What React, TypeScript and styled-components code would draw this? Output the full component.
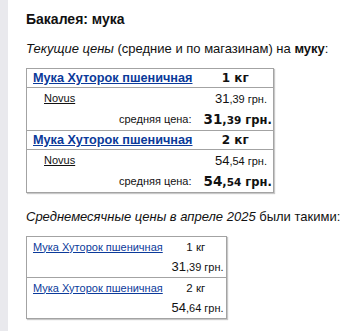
import React from "react";
import styled, { createGlobalStyle } from "styled-components";

const GlobalStyle = createGlobalStyle`
  html, body {
    margin: 0;
    padding: 0;
    background: #e9e9ed;
  }
  body {
    font-family: "Liberation Sans", Arial, sans-serif;
    color: #111;
  }
`;

interface Offer {
  name: string;
  weight: string;
  shop: string;
  price: [string, string];
  avg: [string, string];
}

const current: Offer[] = [
  { name: "Мука Хуторок пшеничная", weight: "1 кг", shop: "Novus", price: ["31", ",39"], avg: ["31", "39"] },
  { name: "Мука Хуторок пшеничная", weight: "2 кг", shop: "Novus", price: ["54", ",54"], avg: ["54", "54"] },
];

const monthly = [
  { name: "Мука Хуторок пшеничная", weight: "1 кг", price: ["31", ",39"] },
  { name: "Мука Хуторок пшеничная", weight: "2 кг", price: ["54", ",64"] },
];

const App: React.FC = () => {
  return (
    <>
      <GlobalStyle />
      <Page>
        <Title>Бакалея: мука</Title>
        <Intro>
          <i>Текущие цены</i> (средние и по магазинам) на <b>муку</b>:
        </Intro>

        <PriceTable $width={248}>
          <colgroup>
            <col style={{ width: 171 }} />
            <col />
          </colgroup>
          {current.map((o, i) => (
            <tbody key={i}>
              <HeadRow>
                <NameCell>
                  <ProductLink href="#" $bold>
                    {o.name}
                  </ProductLink>
                </NameCell>
                <WeightCell $bold>{o.weight}</WeightCell>
              </HeadRow>
              <Row $h={21}>
                <ShopCell>
                  <ShopLink href="#">{o.shop}</ShopLink>
                </ShopCell>
                <PriceCell>
                  {o.price[0]}
                  <Cents>{o.price[1]} грн.</Cents>
                </PriceCell>
              </Row>
              <Row $h={22}>
                <AvgLabel>средняя цена:</AvgLabel>
                <AvgPrice>
                  <Big>{o.avg[0]}</Big>,<Small>{o.avg[1]}</Small> грн.
                </AvgPrice>
              </Row>
            </tbody>
          ))}
        </PriceTable>

        <Intro $top={16}>
          <i>Среднемесячные цены в апреле 2025</i> были такими:
        </Intro>

        <PriceTable $width={201}>
          <colgroup>
            <col style={{ width: 139 }} />
            <col />
          </colgroup>
          {monthly.map((o, i) => (
            <tbody key={i}>
              <Row $h={20}>
                <NameCell>
                  <ProductLink href="#">{o.name}</ProductLink>
                </NameCell>
                <WeightCell>{o.weight}</WeightCell>
              </Row>
              <Row $h={21}>
                <td />
                <PriceCell>
                  {o.price[0]}
                  <Cents>{o.price[1]} грн.</Cents>
                </PriceCell>
              </Row>
            </tbody>
          ))}
        </PriceTable>
      </Page>
    </>
  );
};

export default App;

const Page = styled.div`
  margin-left: 8px;
  min-height: 331px;
  background: #fff;
  padding: 10px 0 0 18px;
  box-sizing: border-box;
`;

const Title = styled.h1`
  margin: 0;
  font-size: 14px;
  line-height: 18px;
  font-weight: 700;
  color: #111;
`;

const Intro = styled.p<{ $top?: number }>`
  margin: ${(p) => p.$top ?? 13}px 0 11px;
  font-size: 13px;
  line-height: 16px;
  color: #111;
  b {
    font-weight: 700;
  }
`;

const PriceTable = styled.table<{ $width: number }>`
  width: ${(p) => p.$width}px;
  border-collapse: collapse;
  border: 1px solid #a3a3a3;
  box-shadow: 1px 1px 1px #c8c8c8;
  table-layout: fixed;
  font-size: 12px;
  tbody + tbody {
    border-top: 1px solid #a3a3a3;
  }
`;

const Row = styled.tr<{ $h: number }>`
  height: ${(p) => p.$h}px;
  td {
    padding: 0 6px;
    vertical-align: middle;
  }
`;

const HeadRow = styled.tr`
  height: 19px;
  border-bottom: 1px solid #a3a3a3;
  td {
    padding: 0 6px;
    vertical-align: middle;
  }
`;

const NameCell = styled.td`
  white-space: nowrap;
`;

const ProductLink = styled.a<{ $bold?: boolean }>`
  color: #0b3a9a;
  font-weight: ${(p) => (p.$bold ? 700 : 400)};
  font-size: ${(p) => (p.$bold ? 12.7 : 11)}px;
  text-decoration: underline;
`;

const WeightCell = styled.td<{ $bold?: boolean }>`
  text-align: center;
  font-family: ${(p) => (p.$bold ? '"DejaVu Sans", Verdana, sans-serif' : "inherit")};
  font-weight: ${(p) => (p.$bold ? 700 : 400)};
  font-size: ${(p) => (p.$bold ? 12 : 11.5)}px;
`;

const ShopCell = styled.td`
  && {
    padding-left: 17px;
  }
`;

const ShopLink = styled.a`
  color: #111;
  font-size: 11px;
  text-decoration: underline;
`;

const PriceCell = styled.td`
  text-align: right;
  white-space: nowrap;
  font-size: 13px;
  color: #111;
`;

const Cents = styled.span`
  font-size: 11px;
`;

const AvgLabel = styled.td`
  text-align: right;
  font-size: 11px;
`;

const AvgPrice = styled.td`
  text-align: right;
  white-space: nowrap;
  font-family: "DejaVu Sans", Verdana, sans-serif;
  font-weight: 700;
  font-size: 11.5px;
`;

const Big = styled.span`
  font-size: 13.5px;
`;

const Small = styled.span`
  font-size: 10.5px;
`;
